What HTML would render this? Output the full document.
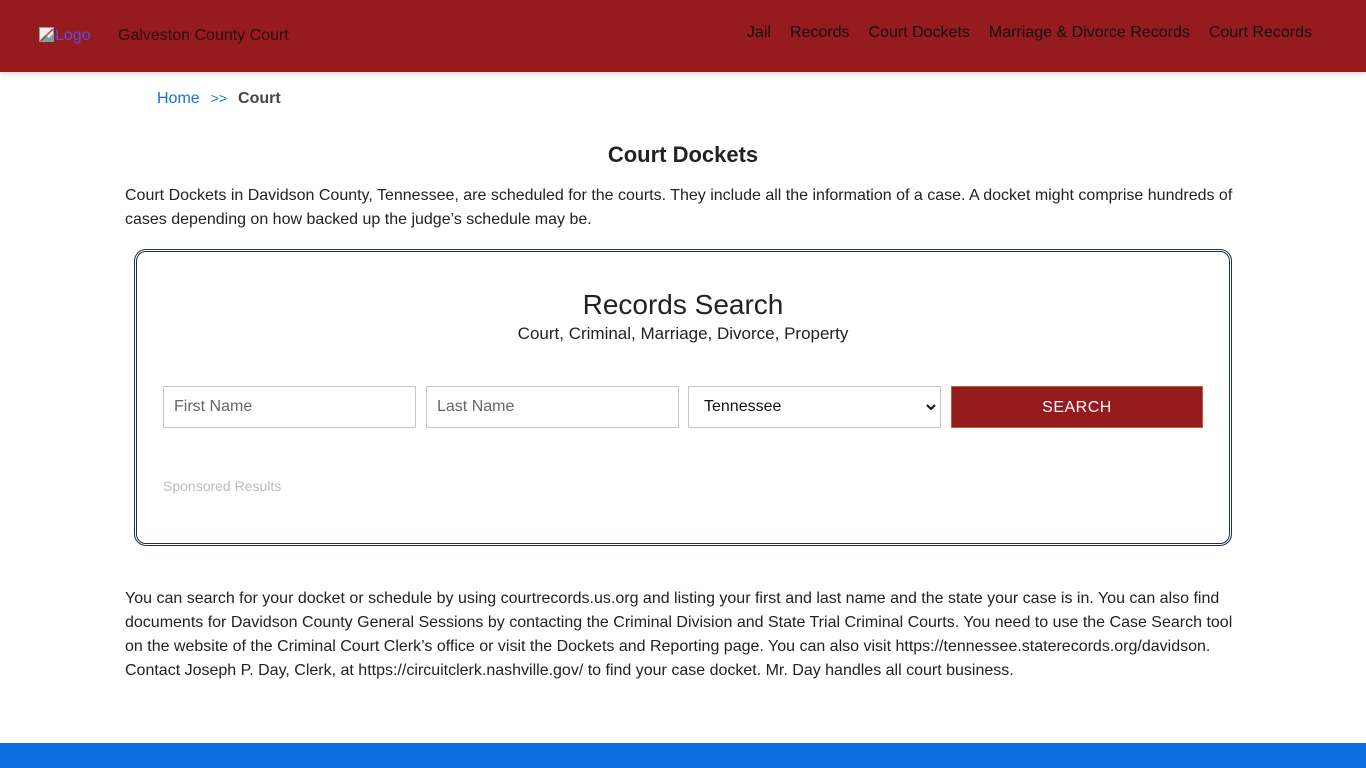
<!DOCTYPE html>
<html><head><meta charset="utf-8"><style>
*{box-sizing:border-box;margin:0;padding:0}
body{width:1366px;height:768px;overflow:hidden;font-family:"Liberation Sans",Arial,sans-serif;background:#fff;color:#222;position:relative}
.hdr{position:absolute;left:0;top:0;width:1366px;height:72px;background:#961b1e;box-shadow:0 2px 6px rgba(0,0,0,.15)}
.logo{position:absolute;left:39px;top:27px;font-size:16px;color:#5a4fe0;display:flex;align-items:flex-end}
.logo span.ic{display:inline-block;width:16px;height:16px;position:relative;top:-2px}
.site{position:absolute;left:118px;top:27px;font-size:16px;color:#2e0c0c}
.nav{position:absolute;right:54px;top:24px;font-size:16px;color:#111}
.nav span{margin-left:19px}
.bc{position:absolute;left:157px;top:90px;font-size:16px}
.bc a{color:#1a6fd6;text-decoration:none}
.bc .sep{color:#1a6fd6;margin:0 11px 0 11px;font-size:14px}
.bc b{color:#444}
h1{position:absolute;left:0;width:1366px;top:142px;text-align:center;font-size:22px;font-weight:bold;color:#222}
p{position:absolute;left:125px;width:1116px;font-size:16px;line-height:24px;color:#222}
.box{position:absolute;left:134px;top:249px;width:1098px;height:297px;border:3px double #1e2f4a;border-radius:12px}
.box h2{position:absolute;left:0;width:100%;top:37px;text-align:center;font-size:28px;font-weight:normal;color:#222}
.box .sub{position:absolute;left:0;width:100%;top:72px;text-align:center;font-size:17px;color:#222}
.in{position:absolute;top:134px;width:253px;height:42px;border:1px solid #c8c8c8;font-size:16px;color:#666;padding:11px 10px}
.btn{position:absolute;top:134px;left:814px;width:252px;height:42px;background:#961b1e;border:1px solid #b0603a;color:#fff;font-size:16px;text-align:center;line-height:42px;letter-spacing:.5px}
.sp{position:absolute;left:26px;top:226px;font-size:14px;color:#bbb}
.foot{position:absolute;left:0;top:743px;width:1366px;height:25px;background:#0b6ee0}
</style></head><body>
<div class="hdr">
 <div class="logo"><span class="ic"><svg width="16" height="16"><rect x="0.5" y="0.5" width="14" height="14" fill="#eee" stroke="#999"/><path d="M1 13 L6 8 L10 11 L14 7 L14 14 L1 14Z" fill="#6a9"/><path d="M2 14 L14 2" stroke="#c33" stroke-width="1.5"/></svg></span>Logo</div>
 <div class="site">Galveston County Court</div>
 <div class="nav"><span>Jail</span><span>Records</span><span>Court Dockets</span><span>Marriage &amp; Divorce Records</span><span>Court Records</span></div>
</div>
<div class="bc"><a>Home</a><span class="sep">&gt;&gt;</span><b>Court</b></div>
<h1>Court Dockets</h1>
<p style="top:184px">Court Dockets in Davidson County, Tennessee, are scheduled for the courts. They include all the information of a case. A docket might comprise hundreds of cases depending on how backed up the judge’s schedule may be.</p>
<div class="box">
 <h2>Records Search</h2>
 <div class="sub">Court, Criminal, Marriage, Divorce, Property</div>
 <div class="in" style="left:26px">First Name</div>
 <div class="in" style="left:289px">Last Name</div>
 <div class="in" style="left:551px;color:#111;padding-left:15px">Tennessee<svg style="position:absolute;right:4px;top:16px" width="10" height="8"><path d="M1 2 L5 6 L9 2" stroke="#111" stroke-width="2" fill="none"/></svg></div>
 <div class="btn">SEARCH</div>
 <div class="sp">Sponsored Results</div>
</div>
<p style="top:587px">You can search for your docket or schedule by using courtrecords.us.org and listing your first and last name and the state your case is in. You can also find documents for Davidson County General Sessions by contacting the Criminal Division and State Trial Criminal Courts. You need to use the Case Search tool on the website of the Criminal Court Clerk’s office or visit the Dockets and Reporting page. You can also visit https://tennessee.staterecords.org/davidson. Contact Joseph P. Day, Clerk, at https://circuitclerk.nashville.gov/ to find your case docket. Mr. Day handles all court business.</p>
<div class="foot"></div>
</body></html>
